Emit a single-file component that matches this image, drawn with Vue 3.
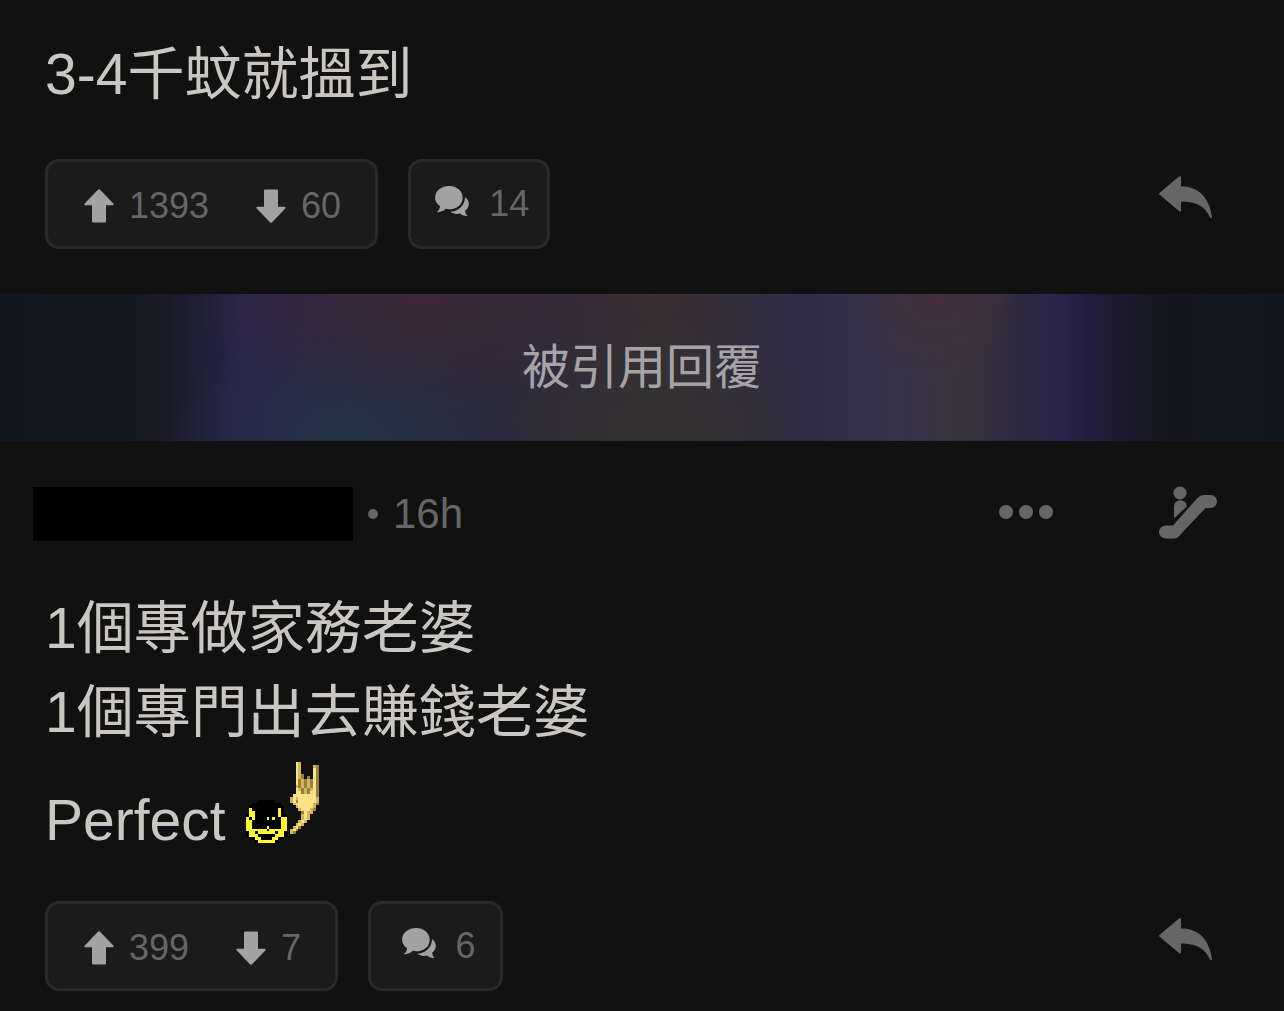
<template>
  <main class="thread">
    <article class="post post-first">
      <div class="content">
        <p class="line">3-4千蚊就搵到</p>
      </div>
      <div class="toolbar">
        <div class="votes">
          <button type="button" class="vote" aria-label="Like">
            <svg class="arrow" viewBox="0 0 30 34"><path :d="upPath" /></svg>
            <span>1393</span>
          </button>
          <button type="button" class="vote" aria-label="Dislike">
            <svg class="arrow down" viewBox="0 0 30 34"><path :d="upPath" /></svg>
            <span>60</span>
          </button>
        </div>
        <button type="button" class="comments" aria-label="Comments">
          <svg class="bubbles" viewBox="0 0 36 32">
            <path :d="backBubblePath" />
            <path :d="frontBubblePath" />
          </svg>
          <span>14</span>
        </button>
        <button type="button" class="icon-button reply" aria-label="Reply">
          <svg width="54" height="43" viewBox="0 0 54 43"><path :d="replyPath" /></svg>
        </button>
      </div>
    </article>

    <h2 class="banner">被引用回覆</h2>

    <article class="post">
      <header class="post-header">
        <span class="author"></span>
        <span class="dot"></span>
        <time class="time">16h</time>
        <button type="button" class="icon-button more" aria-label="More">
          <svg width="54" height="14" viewBox="0 0 54 14">
            <circle cx="7" cy="7" r="7" />
            <circle cx="27" cy="7" r="7" />
            <circle cx="47" cy="7" r="7" />
          </svg>
        </button>
        <button type="button" class="icon-button follow" aria-label="Follow story">
          <svg width="60" height="53" viewBox="0 0 60 53">
            <circle cx="21" cy="7" r="6.500" />
            <path d="M15 32.500V20.500C15 12 27.800 12 27.800 20.500Z" />
            <path d="M6.500 39.500H14L38 12.500C40.500 10 42 9 45.500 9H51.500A6.500 6.500 0 0 1 51.500 22H46.500L21.500 48.500C19 51.500 17.500 52.500 14.500 52.500H6.500A6.500 6.500 0 0 1 6.500 39.500Z" />
          </svg>
        </button>
      </header>
      <div class="content">
        <p class="line">1個專做家務老婆</p>
        <p class="line">1個專門出去賺錢老婆</p>
        <p class="line line-emoji">
          <span>Perfect</span>
          <svg class="emoji" viewBox="0 0 25 28" shape-rendering="crispEdges">
            <rect
              v-for="pixel in emojiPixels"
              :key="pixel.key"
              :x="pixel.x"
              :y="pixel.y"
              width="1"
              height="1"
              :fill="pixel.color"
            />
          </svg>
        </p>
      </div>
      <div class="toolbar">
        <div class="votes">
          <button type="button" class="vote" aria-label="Like">
            <svg class="arrow" viewBox="0 0 30 34"><path :d="upPath" /></svg>
            <span>399</span>
          </button>
          <button type="button" class="vote" aria-label="Dislike">
            <svg class="arrow down" viewBox="0 0 30 34"><path :d="upPath" /></svg>
            <span>7</span>
          </button>
        </div>
        <button type="button" class="comments" aria-label="Comments">
          <svg class="bubbles" viewBox="0 0 36 32">
            <path :d="backBubblePath" />
            <path :d="frontBubblePath" />
          </svg>
          <span>6</span>
        </button>
        <button type="button" class="icon-button reply" aria-label="Reply">
          <svg width="54" height="43" viewBox="0 0 54 43"><path :d="replyPath" /></svg>
        </button>
      </div>
    </article>
  </main>
</template>

<script setup>
// icon paths
const upPath = 'M14.200 .5Q15 -.2 15.800 .5L29.300 14.500Q30.200 16 28.800 16.200H22V32.500Q22 33.500 21 33.500H9Q8 33.500 8 32.500V16.200H1.200Q-.2 16 .7 14.500Z'
const frontBubblePath = 'M14.500 0C22.500 0 28.500 5 28.500 12S22.500 24 14.500 24Q12.800 24 11.200 23.500C8.800 25.800 5.800 27 1.800 27Q4.800 24.800 5.200 20.900C2 18.700 0 15.600 0 12C0 5 6.500 0 14.500 0Z'
const backBubblePath = 'M31 11.500C34 13.500 35 16 34.800 18.500C34.600 21.700 33.200 24 31 25.500Q31.200 29 33.500 30.800Q29 31.400 25.700 28.500C21.500 29.500 18.500 28.500 15.800 26.600C24 26 30.500 20.500 31 11.500Z'
const replyPath = 'M20 .6Q22 -.5 22 1.500V10.500C38 10 50 20 53 41Q52.500 43.500 51 41.500C46 30 37 25.500 22 25.500V34.500Q22 36.500 20 35L.7 18.800Q-.4 17.800 .7 16.800Z'

// ピクセル絵文字
const palette = {
  B: '#000000',
  Y: '#fdfb2b',
  L: '#fce189',
  M: '#d4b559',
  D: '#94803f'
}

const hand = [
  '..LM.......',
  '..LM....MD.',
  '..LM....LD.',
  '..LM....LD.',
  '..LMD...LD.',
  '..LMD.D.LD.',
  '..LDMDMDLD.',
  '..LDMDMDLD.',
  '..MDMDMDLD.',
  '..LMDMDMLD.',
  '..LLDMDLLD.',
  '.LLLLLLLLD.',
  'MLMLLLLLLM.',
  'MLDLLLLLLM.',
  '.MLLLLLLMD.',
  '..MLLLLLM..',
  '...MLLLMD..',
  '....DLMM...',
  '....MLM....',
  '....MLM....',
  '...MLM.....',
  '..MLM......',
  '.MLD.......',
  'MLD........',
  'MD.........'
]

const head = [
  '....BBBBBB....',
  '..BBBBBBBBBB..',
  '.BBBBBBBBBBBB.',
  '.YBBBBBBBBBYB.',
  '.YYBBBBBBBBYB.',
  'BYYBBBBBBBBYBB',
  'YBYBBBBYBYBBYY',
  'YYBBBBBBBBBBYY',
  'YYBBBBBBBBBBYY',
  'YYBBBBBYBBBBYY',
  'YYYYYYYBYYYYYY',
  'BYYBYYYYYYBYYB',
  'BYYYBBBBBBYYYB',
  '.BBYYBBBBYYBB.',
  '...BYYYYYYB...'
]

const toPixels = (rows, left, top) =>
  rows.flatMap((row, y) =>
    [...row].map((c, x) => ({
      key: `${left + x}-${top + y}`,
      x: left + x,
      y: top + y,
      color: palette[c]
    }))
  ).filter((pixel) => pixel.color)

const emojiPixels = [...toPixels(hand, 15, 0), ...toPixels(head, 0, 13)]
</script>

<style>
body {
  margin: 0;
  background-color: #111111;
}
</style>

<style scoped>
.thread {
  background-color: #111111;
  color: #cac7c2;
  font-family: "Liberation Sans", "Noto Sans CJK TC", sans-serif;
}

.post {
  padding: 46px 65px 20px 45px;
}

.post-first {
  padding-top: 32px;
  padding-bottom: 45px;
}

.line {
  margin: 0;
  font-size: 57px;
  line-height: 84px;
}

.line-emoji {
  display: flex;
  align-items: flex-end;
  gap: 20px;
  padding-top: 8px;
  line-height: 76px;
}

.emoji {
  width: 73px;
  height: 81px;
  margin-bottom: 15px;
}

.toolbar {
  display: flex;
  align-items: flex-start;
  gap: 30px;
  margin-top: 43px;
}

button {
  margin: 0;
  padding: 0;
  border: none;
  background: none;
  color: #666666;
  font-family: inherit;
  font-size: 36px;
  line-height: 40px;
  cursor: pointer;
}

svg {
  display: block;
  flex: none;
  fill: currentColor;
}

.votes,
.comments {
  display: flex;
  align-items: center;
  box-sizing: border-box;
  height: 90px;
  border: 3px solid #2a2a2a;
  border-radius: 14px;
  background-color: #1b1b1b;
}

.votes {
  gap: 47px;
  padding: 3px 34px 0 36px;
}

.vote {
  display: flex;
  align-items: center;
  gap: 15px;
}

.arrow {
  width: 30px;
  height: 34px;
  color: #a3a1a2;
}

.down {
  transform: rotate(180deg);
}

.comments {
  justify-content: center;
  gap: 19px;
  min-width: 135px;
  padding: 0 18px 0 24px;
}

.bubbles {
  width: 35px;
  height: 31px;
  margin-bottom: 6px;
  color: #a3a1a2;
}

.icon-button {
  width: 60px;
}

.reply {
  margin-top: 17px;
  margin-left: auto;
}

.banner {
  margin: 0;
  padding: 37px 0;
  color: #a5a3a8;
  font-size: 48px;
  font-weight: 400;
  line-height: 73px;
  text-align: center;
  background:
    radial-gradient(ellipse 18% 80% at 33% 0%, #3c2838 0%, transparent 100%),
    radial-gradient(ellipse 7% 60% at 73% 0%, #422f3a 0%, transparent 100%),
    radial-gradient(ellipse 14% 80% at 27% 100%, #243348 0%, transparent 100%),
    radial-gradient(ellipse 13% 90% at 51% 100%, #343231 0%, transparent 100%),
    radial-gradient(ellipse 9% 80% at 51% 0%, #392e32 0%, transparent 100%),
    linear-gradient(90deg, #131820 0%, #14191f 10%, #1c1c2d 14%, #29254a 19%, #2c2846 24%, #2a293c 31%, #2e2a3c 42%, #322e34 52%, #302c48 63%, #36324a 69%, #39333f 75%, #2c2840 80%, #2a234a 83%, #1d1a2f 87%, #14171f 91%, #131820 100%);
}

.post-header {
  display: flex;
  align-items: center;
  height: 54px;
  margin-bottom: 45px;
  margin-left: -12px;
  color: #666666;
}

.author {
  width: 320px;
  height: 54px;
  background-color: #000000;
}

.dot {
  width: 10px;
  height: 10px;
  margin: 0 15px;
  border-radius: 50%;
  background-color: #666666;
}

.time {
  font-size: 42px;
  line-height: 54px;
}

.more {
  margin-right: 100px;
  margin-left: auto;
}

.more,
.follow {
  padding-bottom: 4px;
}
</style>
